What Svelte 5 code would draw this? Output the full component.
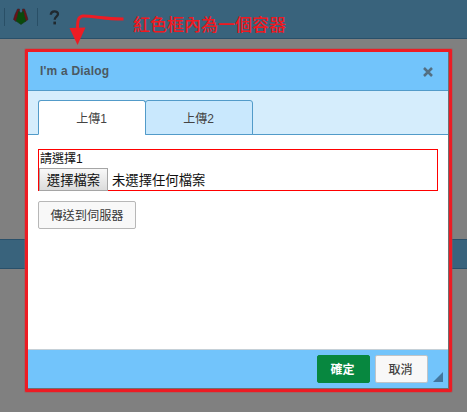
<script>
  const tabs = ['上傳1', '上傳2'];
  let active = $state(0);
</script>

<div class="page">
  <header class="toolbar">
    <span class="sep first"></span>
    <svg class="logo" width="16" height="17" viewBox="0 0 16 17">
      <path d="M4.500 1h2l-.5 8-3 4.500-2.500-2 1.500-5zM9.500 1h2l2 5.500 1.500 5-2.500 2-3-4.500z" fill="#6d1015" stroke="#30262d" stroke-width=".6" />
      <path d="M5.500 3l2.500 2 2.500-2 1 5 1.500 5-5 3.500-5-3.500 1.500-5z" fill="#0a4a0b" stroke="#193b1c" stroke-width=".6" />
    </svg>
    <span class="sep second"></span>
    <svg class="help" width="11" height="15" viewBox="0 0 11 15">
      <path d="M1.800 4.800C1.900.3 9 .4 9 4c0 2.700-3.300 2.600-3.300 5.700" fill="none" stroke="#20292f" stroke-width="2.300" />
      <rect x="4.400" y="11.600" width="2.600" height="2.800" fill="#20292f" />
    </svg>
  </header>
  <div class="band"></div>

  <section class="dialog" role="dialog" aria-label="I'm a Dialog">
    <div class="title">
      <span>I'm a Dialog</span>
      <svg width="10" height="10" viewBox="0 0 10 10"><path d="M1 1l8 8M9 1L1 9" stroke="#536f82" stroke-width="2.500" /></svg>
    </div>
    <nav>
      {#each tabs as tab, i}
        <button class="tab" class:active={active === i} onclick={() => (active = i)}>{tab}</button>
      {/each}
    </nav>
    <main>
      <div class="container">
        <div class="label">請選擇1</div>
        <div class="file"><button class="choose">選擇檔案</button><span>未選擇任何檔案</span></div>
      </div>
      <button class="send">傳送到伺服器</button>
    </main>
    <footer>
      <button class="ok">確定</button>
      <button class="cancel">取消</button>
      <svg class="grip" width="10" height="10" viewBox="0 0 10 10"><path d="M10 0v10H0z" fill="#42779f" /></svg>
    </footer>
  </section>

  <div class="frame"></div>
  <svg class="arrow" width="60" height="37" viewBox="0 0 60 37">
    <path d="M12.500 20c0-8 .5-12 5-13 5-.6 10 .7 18 1.600q10 1.500 23 1.500" fill="none" stroke="#ed1c24" stroke-width="3" />
    <path d="M4.500 19l16-.5-8 17.500z" fill="#ed1c24" />
  </svg>
  <div class="note">紅色框內為一個容器</div>
</div>

<style>
  :global(body) { overflow: hidden; }
  .page {
    position: relative;
    width: 467px;
    height: 412px;
    overflow: hidden;
    background: #808080;
    font-family: "Liberation Sans", "Noto Sans CJK TC", sans-serif;
    color: #333;
  }
  button {
    margin: 0;
    padding: 0;
    font: inherit;
    box-sizing: border-box;
    white-space: nowrap;
  }
  .toolbar {
    display: flex;
    align-items: flex-start;
    height: 38px;
    background: #39637c;
    border-bottom: 1px solid #29506a;
  }
  .sep { width: 1px; height: 18px; background: #294f66; margin-top: 8px; }
  .first { margin-left: 4px; }
  .logo { margin: 8px 0 0 8px; }
  .second { margin-left: 8px; }
  .help { margin: 10px 0 0 11px; }
  .band {
    position: absolute;
    top: 239px;
    left: 0;
    right: 0;
    height: 28px;
    background: #39637c;
    border: solid #29506a;
    border-width: 1px 0;
  }
  .dialog {
    position: absolute;
    left: 28px;
    top: 52px;
    width: 420px;
    height: 336px;
    display: flex;
    flex-direction: column;
    background: #fff;
    box-shadow: 0 0 0 1px #706f70;
  }
  .title {
    box-sizing: border-box;
    height: 39px;
    display: flex;
    align-items: center;
    justify-content: space-between;
    padding: 0 15px 0 12px;
    background: #72c4fb;
    border-bottom: 1px solid #529bc9;
    font-size: 12px;
    line-height: 14px;
    font-weight: bold;
    letter-spacing: .2px;
    color: #4b5962;
  }
  .title svg { position: relative; top: 1px; }
  nav {
    box-sizing: border-box;
    height: 44px;
    display: flex;
    align-items: flex-end;
    padding-left: 10px;
    background: #d5edfc;
    border-bottom: 1px solid #529bc9;
  }
  .tab {
    width: 108px;
    height: 35px;
    margin-bottom: -1px;
    margin-right: -1px;
    padding-right: 1px;
    background: #c9e8fd;
    border: 1px solid #529bc9;
    border-radius: 3px 3px 0 0;
    font-size: 12px;
    color: #444;
  }
  .active { background: #fff; border-bottom-color: #fff; }
  main { flex: 1; padding: 14px 10px 0; }
  .container {
    box-sizing: border-box;
    width: 400px;
    height: 42px;
    border: 1px solid #f00;
    color: #111;
  }
  .label { height: 18px; line-height: 19px; padding-left: 1px; font-size: 12px; }
  .file { display: flex; height: 22px; line-height: 25px; font-size: 13.33px; }
  .choose {
    width: 69px;
    height: 23px;
    margin-right: 4px;
    padding-top: 1px;
    line-height: 21px;
    border: 1px solid #a5a5a5;
    background: linear-gradient(#f8f8f8, #dcdcdc);
    color: #111;
  }
  .send {
    display: block;
    width: 98px;
    height: 28px;
    margin-top: 10px;
    border: 1px solid #b7b7b7;
    border-radius: 2px;
    background: #f8f8f8;
    font-size: 12.2px;
    color: #383838;
  }
  footer {
    box-sizing: border-box;
    height: 39px;
    display: flex;
    justify-content: flex-end;
    padding: 5px 5px 0 0;
    background: #72c4fb;
    border-top: 1px solid #c5d0d7;
  }
  footer button { width: 53px; height: 28px; padding: 0 2px 2px 0; font-size: 12px; font-weight: bold; border-radius: 2px; }
  .ok { background: #07873f; border: 1px solid #07873f; color: #fff; }
  .cancel { margin: 0 5px; background: #f8f8f8; border: 1px solid #c0c4c7; color: #404040; font-weight: 500; }
  .grip { margin-top: 17px; }
  .frame {
    position: absolute;
    left: 25px;
    top: 49px;
    width: 421px;
    height: 337px;
    border: 3px solid #ed1c24;
    border-radius: 1px;
    box-shadow: 0 0 0 1px #a94e5166;
  }
  .arrow { position: absolute; left: 65px; top: 9px; }
  .note {
    position: absolute;
    left: 133px;
    top: 14px;
    font: 500 17px/20px "Noto Sans CJK TC", sans-serif;
    color: #f01820;
    white-space: nowrap;
  }
</style>
